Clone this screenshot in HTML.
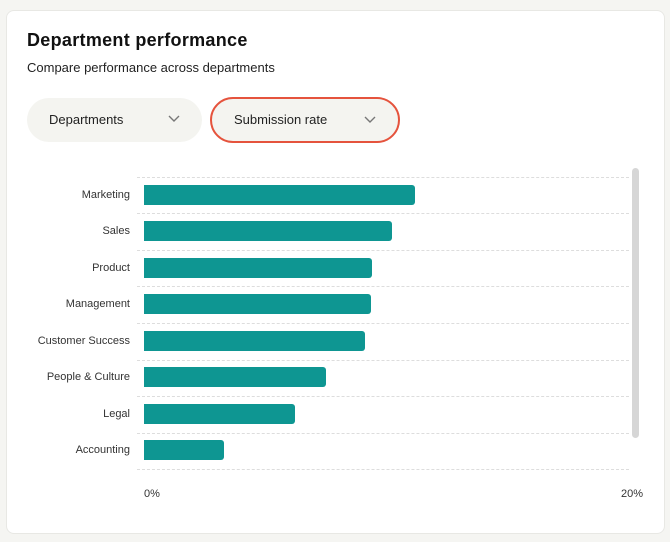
<!DOCTYPE html>
<html><head><style>
body{margin:0;background:#f5f5f2;width:670px;height:542px;position:relative;font-family:"Liberation Sans",sans-serif;overflow:hidden}
.card{position:absolute;left:6px;top:10px;width:657px;height:522px;background:#fff;border:1px solid #e8e8e4;border-radius:8px}
.a{position:absolute}
h1{position:absolute;left:27px;top:30px;margin:0;font-size:18px;font-weight:bold;color:#111;letter-spacing:0.3px}
.sub{left:27px;top:60px;font-size:13px;color:#222}
.dd{position:absolute;box-sizing:border-box;border-radius:23px;font-size:13px;color:#222;padding-left:22px;line-height:44px}
.dd svg{position:absolute;right:22px;top:17px}
.lbl{position:absolute;right:540px;font-size:11px;color:#333;text-align:right;white-space:nowrap}
.bar{position:absolute;left:144px;height:20px;background:#0e9692;border-radius:0 3px 3px 0}
.grid{position:absolute;left:137px;width:492px;border-top:1px dashed #ddd}
</style></head><body>
<div class="card"></div>
<h1>Department performance</h1>
<div class="a sub">Compare performance across departments</div>
<div class="dd" style="left:27px;top:98px;width:175px;height:44px;background:#f4f4f0">Departments<svg width="12" height="8" viewBox="0 0 12 8"><path d="M1 1l5 5 5-5" fill="none" stroke="#777" stroke-width="1.4"/></svg></div>
<div class="dd" style="left:210px;top:97px;width:190px;height:46px;background:#f4f4f0;border:2px solid #e5533d;line-height:42px">Submission rate<svg width="12" height="8" viewBox="0 0 12 8" style="top:17px"><path d="M1 1l5 5 5-5" fill="none" stroke="#777" stroke-width="1.4"/></svg></div>
<div class="grid" style="top:177px"></div><div class="grid" style="top:213px"></div><div class="grid" style="top:250px"></div><div class="grid" style="top:286px"></div><div class="grid" style="top:323px"></div><div class="grid" style="top:360px"></div><div class="grid" style="top:396px"></div><div class="grid" style="top:433px"></div><div class="grid" style="top:469px"></div>
<div class="bar" style="top:185px;width:271px"></div><div class="lbl" style="top:189px">Marketing</div>
<div class="bar" style="top:221px;width:248px"></div><div class="lbl" style="top:225px">Sales</div>
<div class="bar" style="top:258px;width:228px"></div><div class="lbl" style="top:262px">Product</div>
<div class="bar" style="top:294px;width:227px"></div><div class="lbl" style="top:298px">Management</div>
<div class="bar" style="top:331px;width:221px"></div><div class="lbl" style="top:335px">Customer Success</div>
<div class="bar" style="top:367px;width:182px"></div><div class="lbl" style="top:371px">People &amp; Culture</div>
<div class="bar" style="top:404px;width:151px"></div><div class="lbl" style="top:408px">Legal</div>
<div class="bar" style="top:440px;width:80px"></div><div class="lbl" style="top:444px">Accounting</div>
<div class="a" style="left:632px;top:168px;width:7px;height:270px;background:#d6d6d6;border-radius:4px"></div>
<div class="a" style="left:144px;top:488px;font-size:11px;color:#333">0%</div>
<div class="a" style="left:621px;top:488px;font-size:11px;color:#333">20%</div>
</body></html>
